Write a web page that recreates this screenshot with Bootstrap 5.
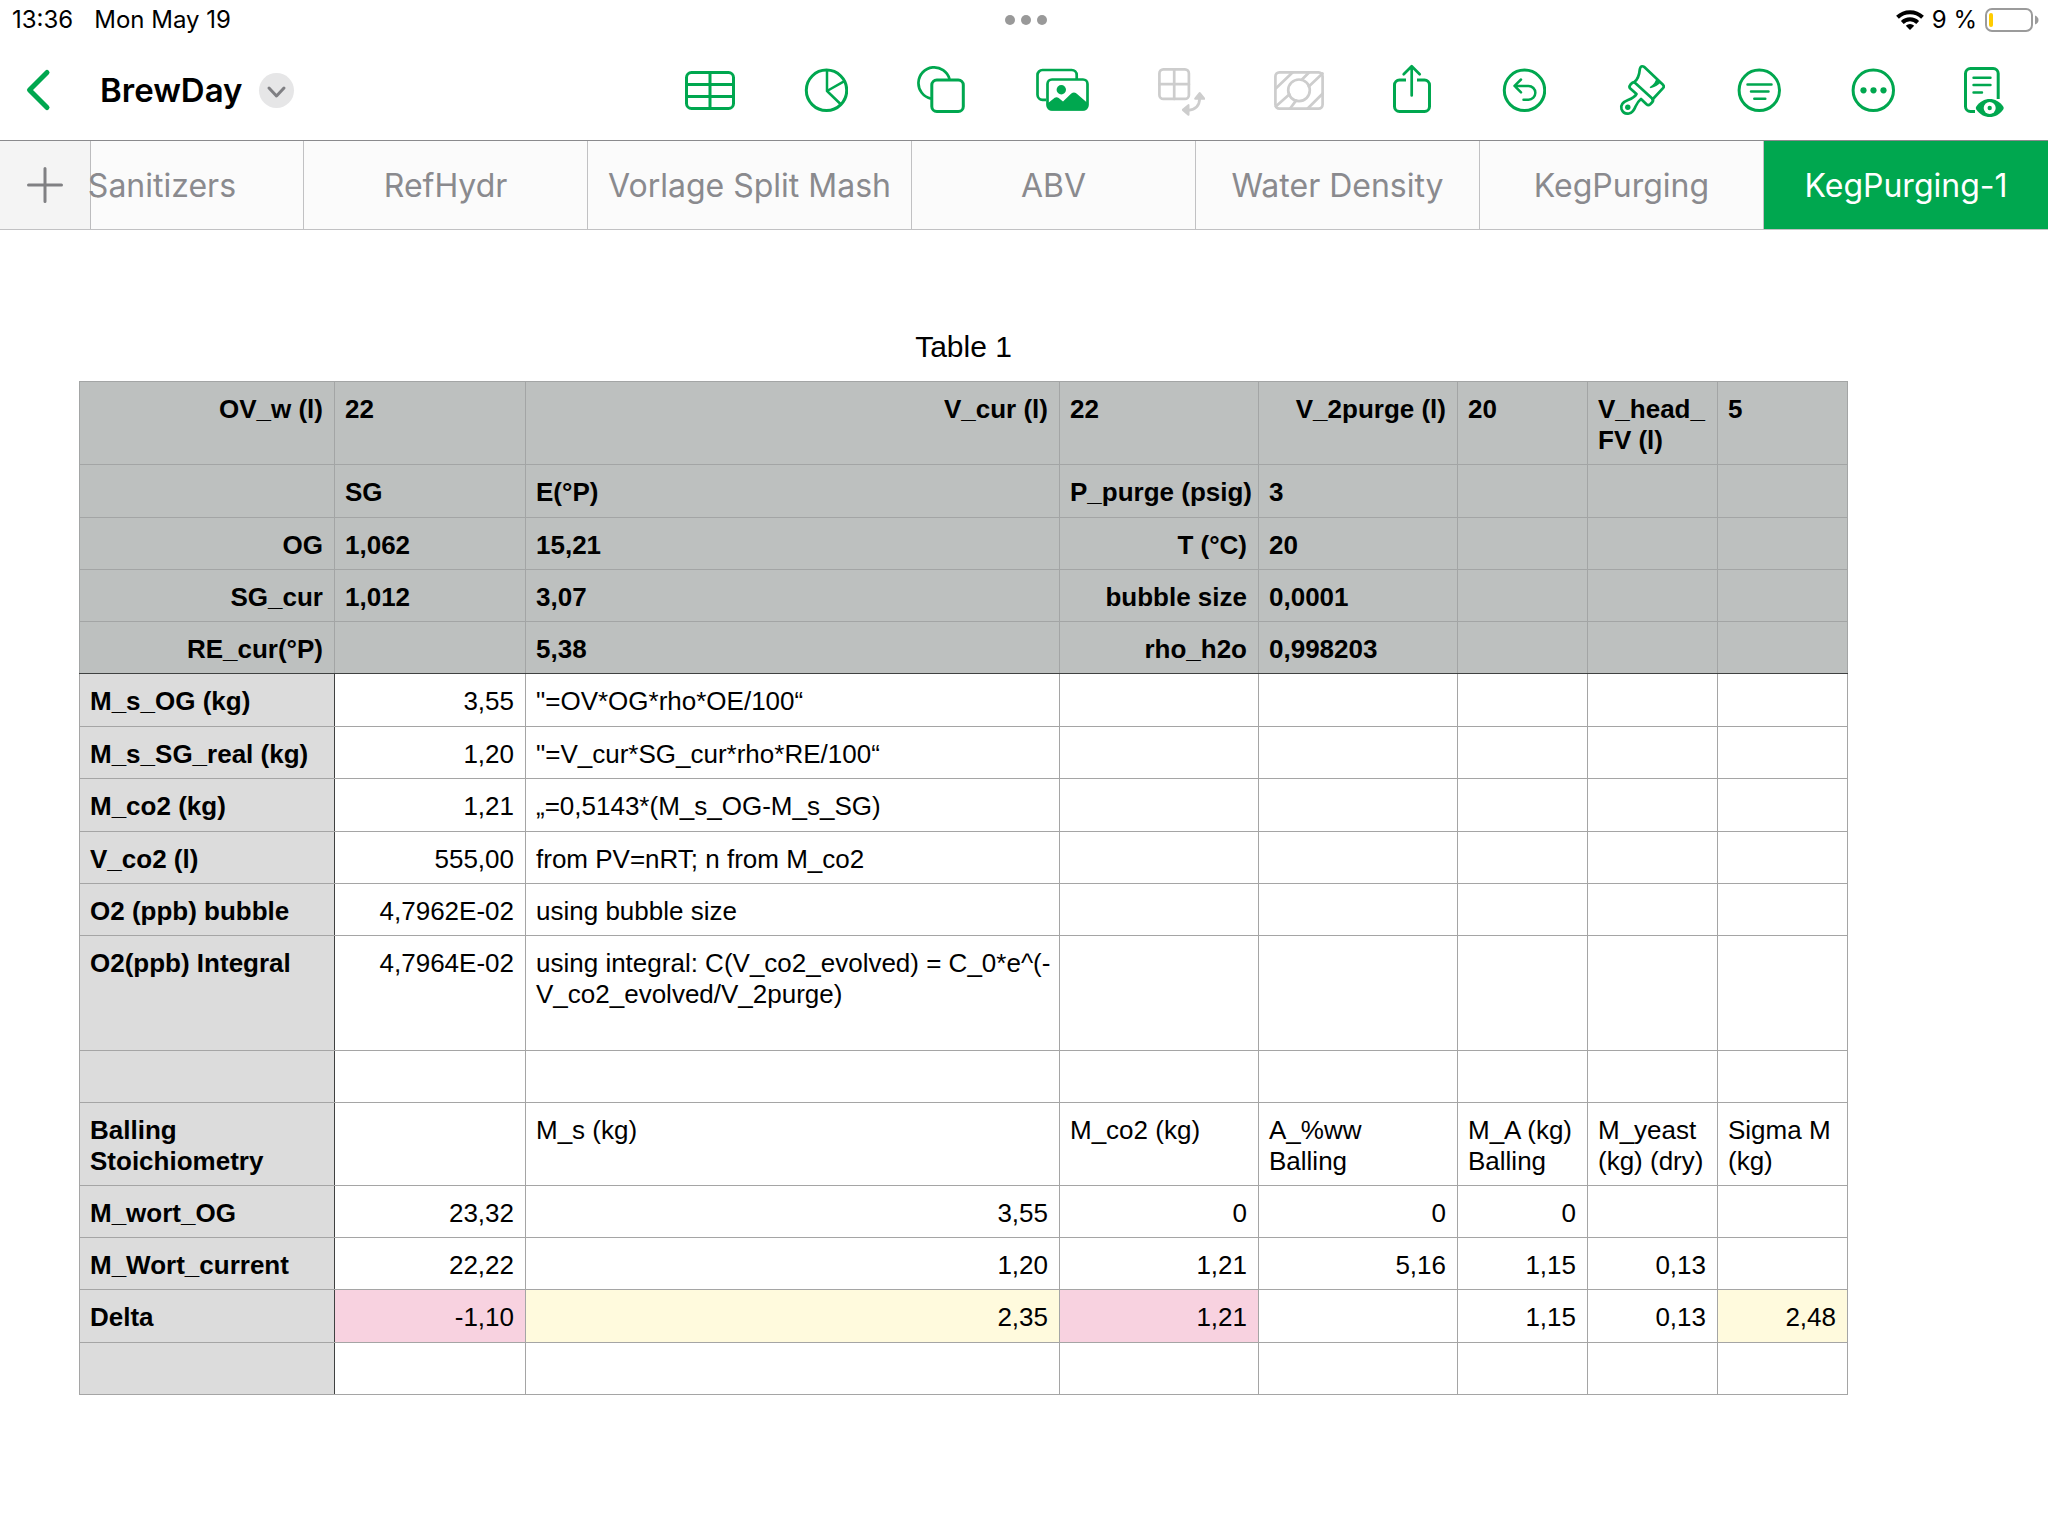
<!DOCTYPE html>
<html lang="en">
<head>
<meta charset="utf-8">
<meta name="viewport" content="width=device-width, initial-scale=1">
<title>BrewDay</title>
<link href="https://cdn.jsdelivr.net/npm/bootstrap@5.3.0/dist/css/bootstrap.min.css" rel="stylesheet">
<style>
  :root { --app-green: #00a74f; --app-off: #cdcdcd; --line: #a5a5a5; --ink: #3f4141; }
  body { font-family: Inter, "Liberation Sans", sans-serif; background: #fff; color: #000; }
  svg { display: block; fill: none; stroke: currentColor; stroke-width: 3; stroke-linecap: round; stroke-linejoin: round; }
  .solid { fill: currentColor; stroke: none; }
  .flat { stroke-linecap: butt; }
  .fine { stroke-width: 2.7; }

  .status-bar { height: 40px; padding: 0 9px 0 12px; font-size: 24px; line-height: 40px; }
  .status-bar .zone { flex: 1 1 0; }
  .status-bar .multitask { color: #999; }
  .clock { margin-right: 21px; }

  .toolbar { height: 101px; padding: 0 44px 0 18px; border-bottom: 1px solid #8a8a8d; }
  .toolbar .tool { padding: 0; border: 0; background: none; color: var(--app-green); }
  .toolbar .tool:disabled { color: var(--app-off); }
  .toolbar h1 { margin: 0 16px 0 40px; font-size: 33px; line-height: 40px; font-weight: 600; }
  .tools { gap: 69px; }
  .title-menu { width: 35px; height: 35px; padding: 0; border: 0; border-radius: 50%; background: #e6e6e7; color: #7f7f83; }

  .sheet-tabs { height: 89px; background: #fbfbfb; border-bottom: 1px solid #c1c1c3; }
  .add-sheet { flex: 0 0 91px; border: 0; border-right: 1px solid #bcbcbe; background: #f4f4f4; color: #808083; }
  .tab-strip { flex: 1 1 0; min-width: 0; }
  .tab-strip a { flex: 0 0 auto; min-width: 284px; padding: 2px 20px 0; border-right: 1px solid #c1c1c3; color: #8a8a8e; font-size: 32px; line-height: 86px; text-align: center; text-decoration: none; white-space: nowrap; }
  .tab-strip a.partial { flex: 1 1 0; min-width: 0; padding: 2px 67px 0 0; display: flex; justify-content: flex-end; }
  .tab-strip a.active { border-right: 0; background: var(--app-green); color: #fff; }

  .canvas { padding: 92px 79px; font-family: "Liberation Sans", Arial, sans-serif; }
  .sheet { width: 1769px; table-layout: fixed; border-collapse: collapse; caption-side: top; font-size: 26px; line-height: 31px; }
  .sheet caption { padding: 6px 0 16px; color: #000; font-size: 30px; line-height: 37px; text-align: center; caption-side: top; }
  .sheet th, .sheet td { padding: 12px 11px 8px 10px; border: 1px solid var(--line); vertical-align: top; }
  .sheet tr { height: 52px; }
  .sheet tr.loose { height: 53px; }
  .sheet tr.roomy { height: 115px; }
  .sheet thead th { background: #bdc0bf; border-color: #a3a5a5; white-space: nowrap; }
  .sheet thead tr:last-child th { border-bottom-color: var(--ink); }
  .sheet tbody tr:first-child > * { border-top-color: var(--ink); }
  .sheet tbody th { background: #dcdcdc; border-right-color: var(--ink); }
  .sheet tbody th + td { border-left-color: var(--ink); }
  .sheet td.pink { background: #f8d2e0; }
  .sheet td.cream { background: #fffadd; }
  .c-name { width: 255px; } .c-val { width: 191px; } .c-note { width: 534px; } .c-mid { width: 199px; } .c-sm { width: 130px; }
</style>
<script src="https://cdn.jsdelivr.net/npm/bootstrap@5.3.0/dist/js/bootstrap.bundle.min.js"></script>
</head>
<body>

<div class="status-bar d-flex align-items-center">
  <div class="zone d-flex"><span class="clock">13:36</span><span>Mon May 19</span></div>
  <svg class="multitask" width="42" height="10" viewBox="0 0 42 10" aria-hidden="true"><g class="solid"><circle cx="5" cy="5" r="5"/><circle cx="21" cy="5" r="5"/><circle cx="37" cy="5" r="5"/></g></svg>
  <div class="zone d-flex justify-content-end align-items-center">
    <svg class="flat" width="28" height="20" viewBox="0 0 28 20" aria-hidden="true"><path stroke-width="4" d="M1.500 7.200A18 18 0 0 1 26.500 7.200M6.300 12.500A11 11 0 0 1 21.700 12.500"/><path class="solid" d="M14 20l-4.200-4.200a6 6 0 0 1 8.400 0z"/></svg>
    <span class="ms-2 me-2">9 %</span>
    <svg width="54" height="24" viewBox="0 0 54 24" aria-hidden="true"><rect x="1" y="1" width="46" height="22" rx="6" stroke="#9b9b9b" stroke-width="2"/><path fill="#9b9b9b" stroke="none" d="M50 7.500q3.500 1.500 3.500 4.500t-3.500 4.500z"/><rect x="4" y="5" width="4" height="14" rx="2" fill="#ffcc00" stroke="none"/></svg>
  </div>
</div>

<header class="toolbar d-flex align-items-center">
  <button class="tool" type="button" aria-label="Back"><svg width="42" height="44" viewBox="0 0 42 44"><path stroke-width="5" d="M29 4.500L11.500 22l17.500 17.500"/></svg></button>
  <h1>BrewDay</h1>
  <button class="title-menu" type="button" aria-label="Document options"><svg width="35" height="35" viewBox="0 0 35 35"><path d="M10 15l7.500 8 7.500-8"/></svg></button>
  <div class="tools d-flex align-items-center ms-auto">
    <button class="tool" type="button" aria-label="Insert table"><svg width="50" height="60" viewBox="0 0 50 60"><rect x="1.500" y="12.500" width="47" height="36" rx="5"/><path d="M25 12.500v36M1.500 24.500h47M1.500 36.500h47"/></svg></button>
    <button class="tool" type="button" aria-label="Insert chart"><svg width="44" height="60" viewBox="0 0 44 60"><circle cx="22.500" cy="30.300" r="20.200"/><path stroke-width="2.500" d="M23 10.500V31l17-9.700M23 31l13.500 13"/></svg></button>
    <button class="tool" type="button" aria-label="Insert shape"><svg width="48" height="60" viewBox="0 0 48 60"><path class="flat fine" d="M14 38.600A15.800 15.800 0 1 1 32.500 19"/><rect x="14.800" y="20" width="31.500" height="31.500" rx="5"/></svg></button>
    <button class="tool" type="button" aria-label="Insert media"><svg class="flat fine" width="55" height="60" viewBox="0 0 55 60"><path d="M12 39.800H8.500a5 5 0 0 1-5-5V15a5 5 0 0 1 5-5h29.200a5 5 0 0 1 5 5v4"/><rect x="13.500" y="19.500" width="40" height="30" rx="4.500"/><circle class="solid" cx="27.300" cy="29.700" r="4.700"/><path class="solid" d="M13.500 43.500l7.200-5.700q2-1.300 4 .2l4.300 3.500 8.300-8q2.600-2 5.200 0l11 9.500v3a4.500 4.500 0 0 1-4.500 4.500H18a4.500 4.500 0 0 1-4.500-4.500z"/></svg></button>
    <button class="tool" type="button" aria-label="Pivot options" disabled><svg class="fine" width="47" height="60" viewBox="0 0 47 60"><rect x="1.400" y="9.400" width="29.500" height="29.500" rx="4"/><path d="M16.200 9.400v29.500M1.400 24.200h29.500"/><path d="M30 50.300Q41.500 49.500 41.700 38"/><path class="solid" d="M40.600 32.800q1.100-1.400 2.200 0l4.200 5.200q.8 1.700-1 1.700h-8.600q-1.800 0-1-1.700zM24.500 51q-1.200-1.100 0-2.200l5.200-4.400q1.800-.9 1.800 1v9q0 1.900-1.800 1z"/></svg></button>
    <button class="tool" type="button" aria-label="Cell actions" disabled><svg class="fine" width="50" height="60" viewBox="0 0 50 60"><rect x="1.400" y="12.400" width="47.200" height="36.200" rx="4"/><circle cx="25" cy="30.300" r="10.800"/><path d="M2 28.300l16.500-15.800M28 19.500l7-7M34.800 26.500L48.500 13.500M2 46.300l13.500-12M16.300 48.300l5.700-7.700M33.700 48.500L48.500 33.700"/></svg></button>
    <button class="tool" type="button" aria-label="Share"><svg width="38" height="60" viewBox="0 0 38 60"><path class="flat" d="M13 20H6.500a5 5 0 0 0-5 5v21.500a5 5 0 0 0 5 5h25a5 5 0 0 0 5-5V25a5 5 0 0 0-5-5H24"/><path stroke-width="2.700" d="M18.700 35.500V6.500M10.700 14.200l8-8 8 8"/></svg></button>
    <button class="tool" type="button" aria-label="Undo"><svg width="46" height="60" viewBox="0 0 46 60"><circle cx="24.500" cy="30.300" r="20.200"/><path stroke-width="2.500" d="M21 19.500l-6.500 6.300 6.500 6.500M14.700 26h13.800a6.800 6.800 0 0 1 0 13.700h-5"/></svg></button>
    <button class="tool" type="button" aria-label="Format"><svg class="fine" width="50" height="60" viewBox="0 0 50 60"><path d="M19.500 21.800q4.500-3.500 5.300-12.500.8-4.500 4.500-2.300L48 24.800q1.500 1.700 0 3.400L37.500 39.500"/><path d="M20.500 23.300q-2-1.700-3.700 0l-1.500 1.500q-1.700 1.900 0 3.700L21.500 34q-2 3.500-8.500 6-8.200 3.200-6.500 9 2 5.500 7.500 4.500 4.200-.8 6.500-7 2.300-5 5.500-7.500l5.500 5.300q1.900 1.700 3.700 0l2-2q1.700-1.900 0-3.700z"/><path class="solid" d="M41.500 17.500q-.6 5.500-6.700 9.500-.4 1.400 1.500 1.100 6-1.500 9.700-6z"/><circle class="solid" cx="12.800" cy="47.200" r="2.700"/></svg></button>
    <button class="tool" type="button" aria-label="Organize"><svg width="47" height="60" viewBox="0 0 47 60"><circle cx="25.300" cy="30.300" r="20.200"/><path stroke-width="2.500" d="M13.500 24.500h24M17 31.500h17.500M20.300 38.700h11"/></svg></button>
    <button class="tool" type="button" aria-label="More"><svg width="45" height="60" viewBox="0 0 45 60"><circle cx="23.300" cy="30.300" r="20.200"/><g class="solid"><circle cx="13.500" cy="30.300" r="3.100"/><circle cx="23.500" cy="30.300" r="3.100"/><circle cx="33.500" cy="30.300" r="3.100"/></g></svg></button>
    <button class="tool" type="button" aria-label="Reading view"><svg width="40" height="60" viewBox="0 0 40 60"><path class="flat" d="M34.200 39V13.500a5 5 0 0 0-5-5H6.500a5 5 0 0 0-5 5v33a5 5 0 0 0 5 5H11"/><path stroke-width="2.400" d="M9.500 17.700h17M9.500 25h17M9.500 32.500h8.500"/><path class="solid" d="M12.300 46.500C19 36.500 32.500 36.500 39.200 46.500q1 1.500 0 3C32.500 59.500 19 59.500 12.300 49.500q-1-1.500 0-3z"/><circle cx="25.700" cy="48" r="6" fill="#fff" stroke="none"/><circle class="solid" cx="25.700" cy="48" r="2.200"/></svg></button>
  </div>
</header>

<nav class="sheet-tabs d-flex" aria-label="Sheets">
  <button class="add-sheet d-flex align-items-center justify-content-center" type="button" aria-label="Add sheet"><svg width="36" height="36" viewBox="0 0 36 36"><path d="M18 1.500v33M1.500 18h33"/></svg></button>
  <div class="tab-strip d-flex justify-content-end">
    <a href="#" class="partial">Sanitizers</a>
    <a href="#">RefHydr</a>
    <a href="#">Vorlage Split Mash</a>
    <a href="#">ABV</a>
    <a href="#">Water Density</a>
    <a href="#">KegPurging</a>
    <a href="#" class="active" aria-current="page">KegPurging-1</a>
  </div>
</nav>

<main class="canvas">
  <table class="sheet">
    <caption>Table 1</caption>
    <colgroup><col class="c-name"><col class="c-val"><col class="c-note"><col class="c-mid"><col class="c-mid"><col class="c-sm"><col class="c-sm"><col class="c-sm"></colgroup>
    <thead>
      <tr><th class="text-end">OV_w (l)</th><th>22</th><th class="text-end">V_cur (l)</th><th>22</th><th class="text-end">V_2purge (l)</th><th>20</th><th>V_head_<br>FV (l)</th><th>5</th></tr>
      <tr class="loose"><th></th><th>SG</th><th>E(°P)</th><th class="text-end">P_purge (psig)</th><th>3</th><th></th><th></th><th></th></tr>
      <tr><th class="text-end">OG</th><th>1,062</th><th>15,21</th><th class="text-end">T (°C)</th><th>20</th><th></th><th></th><th></th></tr>
      <tr><th class="text-end">SG_cur</th><th>1,012</th><th>3,07</th><th class="text-end">bubble size</th><th>0,0001</th><th></th><th></th><th></th></tr>
      <tr><th class="text-end">RE_cur(°P)</th><th></th><th>5,38</th><th class="text-end">rho_h2o</th><th>0,998203</th><th></th><th></th><th></th></tr>
    </thead>
    <tbody>
      <tr class="loose"><th>M_s_OG (kg)</th><td class="text-end">3,55</td><td>"=OV*OG*rho*OE/100“</td><td></td><td></td><td></td><td></td><td></td></tr>
      <tr><th>M_s_SG_real (kg)</th><td class="text-end">1,20</td><td>"=V_cur*SG_cur*rho*RE/100“</td><td></td><td></td><td></td><td></td><td></td></tr>
      <tr class="loose"><th>M_co2 (kg)</th><td class="text-end">1,21</td><td>„=0,5143*(M_s_OG-M_s_SG)</td><td></td><td></td><td></td><td></td><td></td></tr>
      <tr><th>V_co2 (l)</th><td class="text-end">555,00</td><td>from PV=nRT; n from M_co2</td><td></td><td></td><td></td><td></td><td></td></tr>
      <tr><th>O2 (ppb) bubble</th><td class="text-end">4,7962E-02</td><td>using bubble size</td><td></td><td></td><td></td><td></td><td></td></tr>
      <tr class="roomy"><th>O2(ppb) Integral</th><td class="text-end">4,7964E-02</td><td class="text-nowrap">using integral: C(V_co2_evolved) = C_0*e^(-<br>V_co2_evolved/V_2purge)</td><td></td><td></td><td></td><td></td><td></td></tr>
      <tr><th></th><td></td><td></td><td></td><td></td><td></td><td></td><td></td></tr>
      <tr><th>Balling Stoichiometry</th><td></td><td>M_s (kg)</td><td>M_co2 (kg)</td><td>A_%ww<br>Balling</td><td class="text-nowrap">M_A (kg)<br>Balling</td><td class="text-nowrap">M_yeast<br>(kg) (dry)</td><td class="text-nowrap">Sigma M<br>(kg)</td></tr>
      <tr><th>M_wort_OG</th><td class="text-end">23,32</td><td class="text-end">3,55</td><td class="text-end">0</td><td class="text-end">0</td><td class="text-end">0</td><td></td><td></td></tr>
      <tr><th>M_Wort_current</th><td class="text-end">22,22</td><td class="text-end">1,20</td><td class="text-end">1,21</td><td class="text-end">5,16</td><td class="text-end">1,15</td><td class="text-end">0,13</td><td></td></tr>
      <tr class="loose"><th>Delta</th><td class="text-end pink">-1,10</td><td class="text-end cream">2,35</td><td class="text-end pink">1,21</td><td></td><td class="text-end">1,15</td><td class="text-end">0,13</td><td class="text-end cream">2,48</td></tr>
      <tr><th></th><td></td><td></td><td></td><td></td><td></td><td></td><td></td></tr>
    </tbody>
  </table>
</main>
</body>
</html>
